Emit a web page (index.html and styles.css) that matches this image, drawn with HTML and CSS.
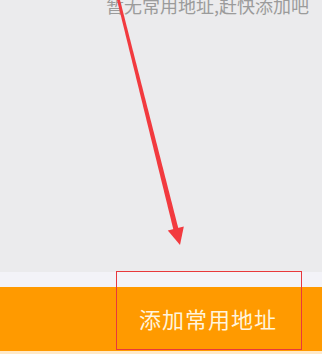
FILE: index.html
```
<!DOCTYPE html>
<html lang="zh-CN">
<head>
    <meta charset="UTF-8">
    <meta name="viewport" content="width=device-width, initial-scale=1.0">
    <title>常用地址</title>
    <link rel="stylesheet" href="styles.css">
</head>
<body>
    <div class="page">
        <div class="content">
            <p class="empty">暂无常用地址,赶快添加吧</p>
        </div>
        <div class="footer">
            <div class="strip"></div>
            <button class="add-btn" type="button">添加常用地址</button>
            <div class="bottom"></div>
        </div>

        <!-- annotation overlay -->
        <svg class="mark" width="322" height="354" viewBox="0 0 322 354">
            <polygon points="116.5,-2 119.5,-2 178.5,229 173.5,230" fill="#f23a3f"/>
            <polygon points="167.8,230.6 183.8,226.4 180,245" fill="#f23a3f"/>
        </svg>
        <div class="mark-box"></div>
    </div>
</body>
</html>
```

FILE: styles.css
```
body {
    margin: 0;
    font-family: "Noto Sans CJK SC", "Noto Sans", sans-serif;
}
.page {
    position: relative;
    width: 322px;
    height: 354px;
    overflow: hidden;
    background-color: #ebebed;
}
.content {
    display: flow-root;
    height: 272px;
}
.empty {
    margin: -6px 0 0 0;
    padding-right: 13px;
    text-align: right;
    font-size: 18px;
    line-height: 22px;
    color: #9b9b9b;
}
.footer {
    display: flex;
    flex-direction: column;
}
.strip {
    height: 15px;
    background-color: #f3f3f8;
}
.add-btn {
    height: 64px;
    border: 0;
    padding: 0 0 2px 94px;
    background-color: #ff9a00;
    color: #fff4dc;
    font-family: inherit;
    font-size: 22px;
    letter-spacing: 1px;
    text-align: center;
}
.bottom {
    height: 3px;
    background-color: #ffe9c8;
}
.mark {
    position: absolute;
    left: 0;
    top: 0;
}
.mark-box {
    position: absolute;
    left: 116px;
    top: 271px;
    width: 184px;
    height: 77px;
    border: 1px solid #e8383d;
}
```
